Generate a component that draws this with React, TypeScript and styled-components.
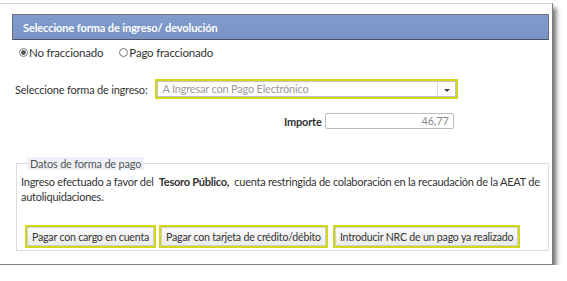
import React from "react";
import styled, { createGlobalStyle } from "styled-components";

const GlobalStyle = createGlobalStyle`
  html, body {
    margin: 0;
    padding: 0;
    background: #ffffff;
  }
  body {
    font-family: Lato, "Open Sans", Arial, sans-serif;
    font-size: 11px;
    letter-spacing: -0.2px;
    color: #333;
  }
`;

// marco con sombra
const Panel = styled.div`
  width: 554px;
  height: 262px;
  margin: 3px 0 0 -1px;
  padding: 10px 0 0 13px;
  box-sizing: border-box;
  background: #fff;
  border-top: 1px solid #d6d6d6;
  border-right: 1px solid #808080;
  border-bottom: 1px solid #808080;
  box-shadow: 3px 5px 5px rgba(0, 0, 0, 0.6);
`;

const Header = styled.div`
  width: 537px;
  height: 26px;
  box-sizing: border-box;
  display: flex;
  align-items: center;
  padding-left: 10px;
  background: linear-gradient(#809bcc, #7893c4);
  border: 1px solid #6d7080;
  border-bottom-color: #4f5260;
  color: #fff;
  font-size: 11px;
  font-weight: 700;
  letter-spacing: -0.1px;
`;

const RadioRow = styled.div`
  display: flex;
  align-items: center;
  gap: 16px;
  height: 18px;
  margin-top: 3px;
  padding-left: 7px;
  font-size: 11.5px;
`;

const RadioLabel = styled.label`
  display: flex;
  align-items: center;
  gap: 1px;
`;

const RadioDot = styled.span<{ $checked?: boolean }>`
  width: 9px;
  height: 9px;
  border-radius: 50%;
  border: 1px solid #7a7a7a;
  box-sizing: border-box;
  background: ${(p) =>
    p.$checked ? "radial-gradient(circle, #555 0 2px, #fff 2.6px)" : "#fff"};
`;

const SelectRow = styled.div`
  display: flex;
  align-items: center;
  gap: 8px;
  margin-top: 18px;
  padding-left: 3px;
`;

const Highlight = styled.div`
  border: 2px solid #d3d71a;
  display: flex;
`;

const SelectBox = styled.div`
  width: 299px;
  height: 16px;
  box-sizing: border-box;
  display: flex;
  border: 1px solid #c4c4c4;
  background: #fff;
`;

const SelectText = styled.span`
  flex: 1;
  padding-left: 4px;
  color: #9a9a9a;
  line-height: 14px;
`;

const Arrow = styled.span`
  width: 17px;
  border-left: 1px solid #dedede;
  display: flex;
  align-items: center;
  justify-content: center;

  &::after {
    content: "";
    border-left: 3px solid transparent;
    border-right: 3px solid transparent;
    border-top: 3px solid #444;
    margin-top: 2px;
  }
`;

const AmountRow = styled.div`
  display: flex;
  align-items: center;
  gap: 3px;
  margin-top: 14px;
  padding-left: 272px;
`;

const AmountLabel = styled.span`
  font-weight: 700;
`;

const AmountInput = styled.div`
  width: 129px;
  height: 16px;
  box-sizing: border-box;
  border: 1px solid #bdbdbd;
  border-radius: 2px;
  color: #8a8a8a;
  text-align: right;
  padding-right: 4px;
  line-height: 14px;
`;

const Fieldset = styled.fieldset`
  width: 533px;
  height: 94px;
  box-sizing: border-box;
  margin: 28px 0 0 4px;
  padding: 0 0 0 4px;
  border: 1px solid #dcdcdc;
`;

const Legend = styled.legend`
  margin-left: 6px;
  padding: 0 3px;
  background: #eef2f8;
  color: #555;
`;

const Info = styled.p`
  margin: 4px 0 0 0;
  line-height: 15px;
  letter-spacing: -0.25px;
  color: #333;
`;

const ButtonRow = styled.div`
  display: flex;
  gap: 3px;
  margin-top: 21px;
  padding-left: 4px;
`;

const ButtonFrame = styled.div<{ $gap?: number }>`
  border: 2px solid #d3d71a;
  display: flex;
  margin-left: ${(p) => p.$gap ?? 0}px;
`;

const Button = styled.button`
  height: 19px;
  padding: 0 4px;
  border: 1px solid #cfcfcf;
  background: linear-gradient(#fafafa, #ececec);
  font-family: Lato, "Open Sans", Arial, sans-serif;
  font-size: 10.6px;
  letter-spacing: -0.2px;
  white-space: nowrap;
  color: #333;
  cursor: pointer;
`;

const buttons = [
  { label: "Pagar con cargo en cuenta", gap: 0 },
  { label: "Pagar con tarjeta de crédito/débito", gap: 0 },
  { label: "Introducir NRC de un pago ya realizado", gap: 2 },
];

export default function App() {
  return (
    <>
      <GlobalStyle />
      <Panel>
        <Header>Seleccione forma de ingreso/ devolución</Header>
        <RadioRow>
          <RadioLabel>
            <RadioDot $checked />
            No fraccionado
          </RadioLabel>
          <RadioLabel>
            <RadioDot />
            Pago fraccionado
          </RadioLabel>
        </RadioRow>
        <SelectRow>
          <span>Seleccione forma de ingreso:</span>
          <Highlight>
            <SelectBox>
              <SelectText>A Ingresar con Pago Electrónico</SelectText>
              <Arrow />
            </SelectBox>
          </Highlight>
        </SelectRow>
        <AmountRow>
          <AmountLabel>Importe</AmountLabel>
          <AmountInput>46,77</AmountInput>
        </AmountRow>
        <Fieldset>
          <Legend>Datos de forma de pago</Legend>
          <Info>
            Ingreso efectuado a favor del{"\u00a0 "}
            <strong>Tesoro Público,</strong>
            {"\u00a0 "}cuenta restringida de colaboración en la recaudación de
            la AEAT de autoliquidaciones.
          </Info>
          <ButtonRow>
            {buttons.map((b) => (
              <ButtonFrame key={b.label} $gap={b.gap}>
                <Button>{b.label}</Button>
              </ButtonFrame>
            ))}
          </ButtonRow>
        </Fieldset>
      </Panel>
    </>
  );
}
